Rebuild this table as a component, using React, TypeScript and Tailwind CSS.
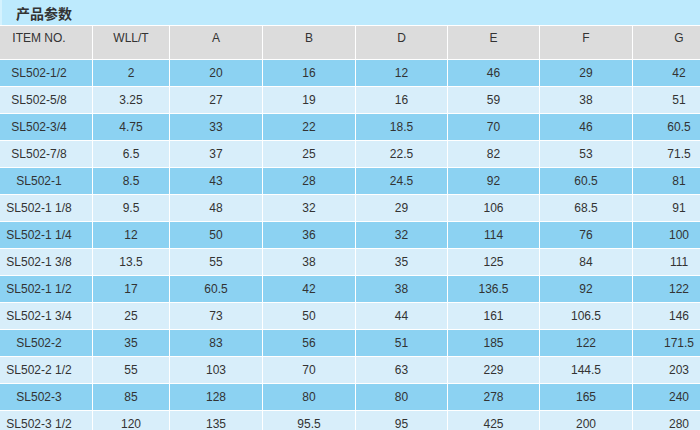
const columns = ['ITEM NO.', 'WLL/T', 'A', 'B', 'D', 'E', 'F', 'G']

const rows: string[][] = [
  ['SL502-1/2', '2', '20', '16', '12', '46', '29', '42'],
  ['SL502-5/8', '3.25', '27', '19', '16', '59', '38', '51'],
  ['SL502-3/4', '4.75', '33', '22', '18.5', '70', '46', '60.5'],
  ['SL502-7/8', '6.5', '37', '25', '22.5', '82', '53', '71.5'],
  ['SL502-1', '8.5', '43', '28', '24.5', '92', '60.5', '81'],
  ['SL502-1 1/8', '9.5', '48', '32', '29', '106', '68.5', '91'],
  ['SL502-1 1/4', '12', '50', '36', '32', '114', '76', '100'],
  ['SL502-1 3/8', '13.5', '55', '38', '35', '125', '84', '111'],
  ['SL502-1 1/2', '17', '60.5', '42', '38', '136.5', '92', '122'],
  ['SL502-1 3/4', '25', '73', '50', '44', '161', '106.5', '146'],
  ['SL502-2', '35', '83', '56', '51', '185', '122', '171.5'],
  ['SL502-2 1/2', '55', '103', '70', '63', '229', '144.5', '203'],
  ['SL502-3', '85', '128', '80', '80', '278', '165', '240'],
  ['SL502-3 1/2', '120', '135', '95.5', '95', '425', '200', '280'],
]

const gridCols = 'grid grid-cols-[92px_76px_92px_92px_91px_91px_92px_92px] gap-x-px'

function App() {
  return (
    <div className="h-[430px] w-[700px] overflow-hidden bg-white font-['Liberation_Sans',Arial,sans-serif] text-[12px] text-[#333]">
      <div className="flex h-[25px] w-[726px] items-center border-l-2 border-[#d4f2fe] bg-[#bdeafd] pl-[14px]">
        <span className="font-['Noto_Sans_CJK_SC',sans-serif] text-[14px] font-bold leading-none text-[#333]">
          产品参数
        </span>
      </div>

      <div className="flex w-[726px] flex-col gap-y-px bg-white pt-px">
        <div className={`${gridCols} h-[33px]`}>
          {columns.map((col, i) => (
            <div
              key={col}
              className={`bg-[#dcdcdc] pt-[4px] text-center leading-[16px] ${i === 0 ? 'pr-[14px]' : ''}`}
            >
              {col}
            </div>
          ))}
        </div>

        {rows.map((row, r) => (
          <div key={row[0]} className={`${gridCols} h-[26px]`}>
            {row.map((cell, i) => (
              <div
                key={i}
                className={`flex items-center justify-center whitespace-nowrap ${
                  r % 2 === 0 ? 'bg-[#8cd2f2]' : 'bg-[#d8eefa]'
                } ${i === 0 ? 'pr-[14px]' : ''}`}
              >
                {cell}
              </div>
            ))}
          </div>
        ))}
      </div>
    </div>
  )
}

export default App
